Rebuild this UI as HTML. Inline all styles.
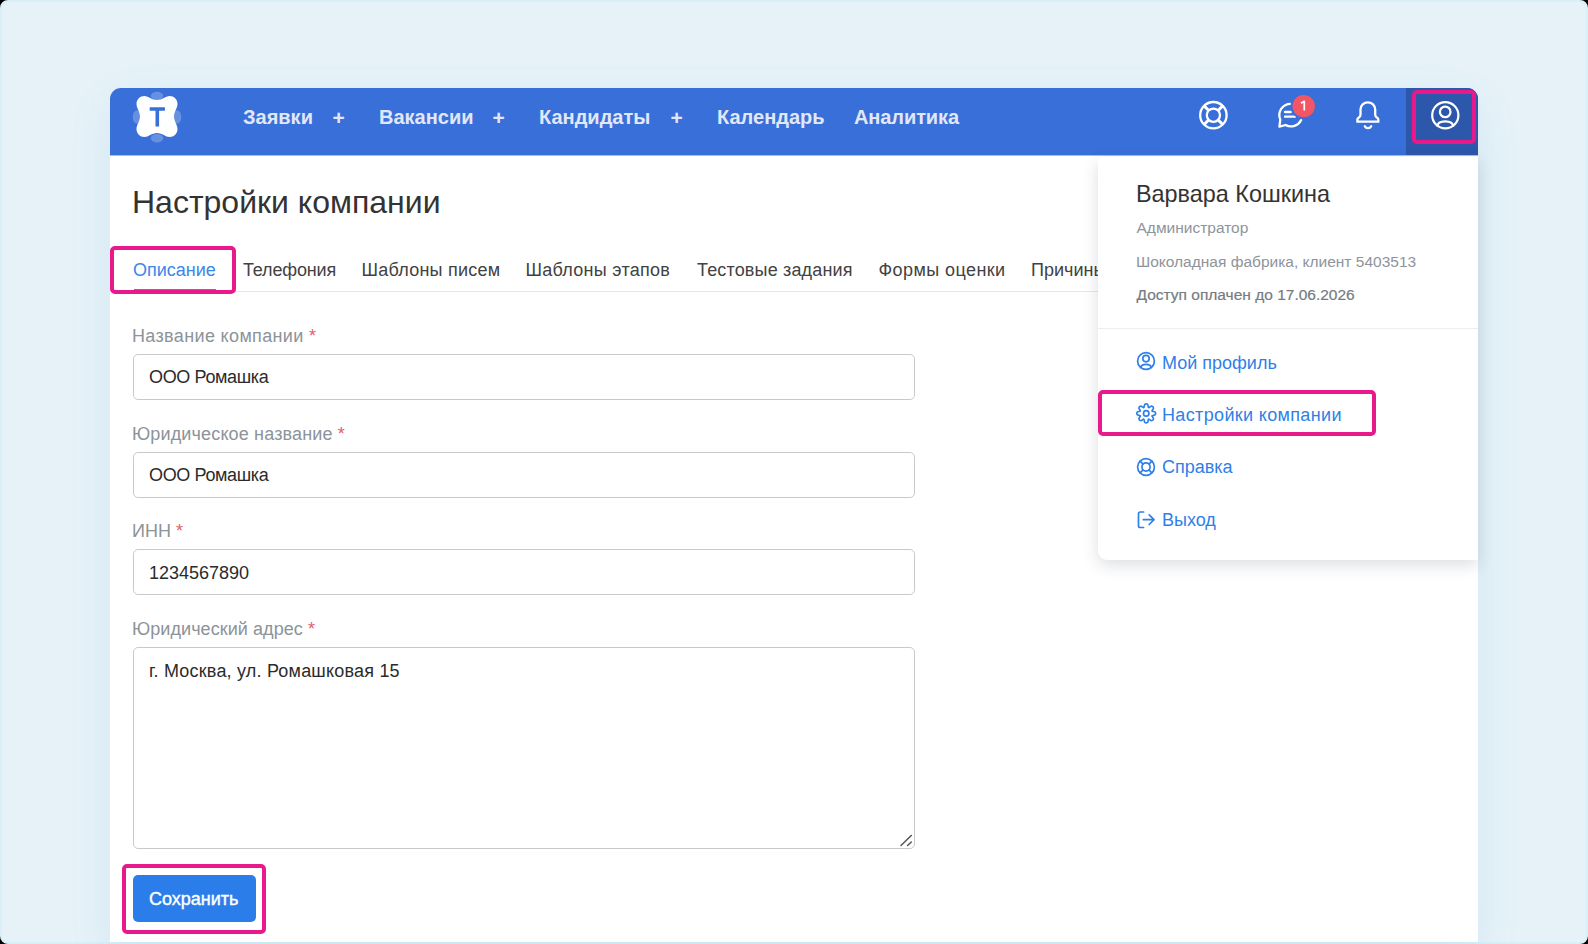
<!DOCTYPE html>
<html><head><meta charset="utf-8">
<style>
*{box-sizing:border-box;margin:0;padding:0}
html,body{width:1588px;height:944px;overflow:hidden;background:#000}
body{font-family:"Liberation Sans",sans-serif;position:relative}
.frame{position:absolute;left:0;top:0;width:1588px;height:944px;border-radius:8px;background:#e6f2f8;border:2px solid #d8f0f8;overflow:hidden}
.card{position:absolute;left:110px;top:88px;width:1368px;height:854px;background:#fff;border-radius:11px 11px 0 0;box-shadow:0 16px 44px rgba(60,150,200,.11)}
.nav{position:absolute;left:110px;top:88px;width:1368px;height:67px;background:#386fd8;border-radius:11px 11px 0 0;overflow:hidden}
.t{position:absolute;white-space:nowrap;line-height:1}
.navt{color:#e2e7f8;font-weight:bold;font-size:20px}
.userbg{position:absolute;left:1296px;top:0;width:72px;height:67px;background:#2c57ab}
.pink{position:absolute;border:4px solid #e8198b;border-radius:5px}
.title{font-size:32px;color:#333}
.tab{font-size:18px;color:#424242}
.lbl{font-size:18px;color:#8c9399}
.req{color:#e3606b}
.inp{position:absolute;left:133px;width:782px;height:46px;border:1px solid #c6cacd;border-radius:5px;background:#fff}
.val{font-size:18px;color:#2b2b2b}
.dd{position:absolute;left:1098px;top:157px;width:380px;height:403px;background:#fff;border-radius:5px 0 0 9px;box-shadow:0 5px 16px rgba(40,50,70,.16)}
.menu{font-size:18px;color:#2f7fe8}
.grey{font-size:15.5px;color:#8e949b}
.svg{position:absolute;left:0;top:0}
</style></head><body>
<div class="frame"></div>
<div class="card"></div>
<div class="nav"><div class="userbg"></div></div>
<div style="position:absolute;left:110px;top:155px;width:1368px;height:1px;background:rgba(56,111,216,.45)"></div>

<!-- nav texts -->
<div class="t navt" style="left:243px;top:107px">Заявки</div>
<div class="t navt" style="left:332.5px;top:106.5px;font-size:21px">+</div>
<div class="t navt" style="left:379px;top:107px">Вакансии</div>
<div class="t navt" style="left:492.5px;top:106.5px;font-size:21px">+</div>
<div class="t navt" style="left:539px;top:107px">Кандидаты</div>
<div class="t navt" style="left:670.5px;top:106.5px;font-size:21px">+</div>
<div class="t navt" style="left:717px;top:107px">Календарь</div>
<div class="t navt" style="left:854px;top:107px;letter-spacing:-0.1px">Аналитика</div>

<!-- title & tabs -->
<div class="t title" style="left:132px;top:186px">Настройки компании</div>
<div style="position:absolute;left:133px;top:291px;width:965px;height:1px;background:#e4e6e8"></div>
<div style="position:absolute;left:134px;top:289px;width:82px;height:2px;background:#3b86ea"></div>
<div class="t tab" style="left:133px;top:261px;color:#3b86ea">Описание</div>
<div class="t tab" style="left:243px;top:261px;letter-spacing:-0.15px">Телефония</div>
<div class="t tab" style="left:361.5px;top:261px;letter-spacing:0.24px">Шаблоны писем</div>
<div class="t tab" style="left:525.5px;top:261px;letter-spacing:0.28px">Шаблоны этапов</div>
<div class="t tab" style="left:697px;top:261px;letter-spacing:0.16px">Тестовые задания</div>
<div class="t tab" style="left:878.5px;top:261px;letter-spacing:0.42px">Формы оценки</div>
<div class="t tab" style="left:1031px;top:261px">Причины отказа</div>

<!-- form -->
<div class="t lbl" style="left:132px;top:327px;letter-spacing:0.35px">Название компании <span class="req">*</span></div>
<div class="inp" style="top:354px;height:46px"></div>
<div class="t val" style="left:149px;top:368px;letter-spacing:-0.36px">ООО Ромашка</div>

<div class="t lbl" style="left:132px;top:425px;letter-spacing:0.15px">Юридическое название <span class="req">*</span></div>
<div class="inp" style="top:452px;height:46px"></div>
<div class="t val" style="left:149px;top:466px;letter-spacing:-0.36px">ООО Ромашка</div>

<div class="t lbl" style="left:132px;top:522px">ИНН <span class="req">*</span></div>
<div class="inp" style="top:549px;height:46px"></div>
<div class="t val" style="left:149px;top:564px">1234567890</div>

<div class="t lbl" style="left:132px;top:620px;letter-spacing:0.07px">Юридический адрес <span class="req">*</span></div>
<div class="inp" style="top:647px;height:202px"></div>
<div class="t val" style="left:149px;top:662px;letter-spacing:0.2px">г. Москва, ул. Ромашковая 15</div>

<div style="position:absolute;left:133px;top:875px;width:123px;height:47px;background:#2b7ee9;border-radius:5px"></div>
<div class="t" style="left:149px;top:890px;font-size:18px;color:#fff;-webkit-text-stroke:0.4px #fff">Сохранить</div>

<!-- dropdown -->
<div class="dd"></div>
<div class="t" style="left:1136px;top:183px;font-size:23.4px;color:#333">Варвара Кошкина</div>
<div class="t grey" style="left:1136.5px;top:220px">Администратор</div>
<div class="t grey" style="left:1136px;top:254px">Шоколадная фабрика, клиент 5403513</div>
<div class="t grey" style="left:1136.5px;top:286.5px;color:#767b81;-webkit-text-stroke:0.2px #767b81">Доступ оплачен до 17.06.2026</div>
<div style="position:absolute;left:1098px;top:328px;width:380px;height:1px;background:#eceef0"></div>
<div class="t menu" style="left:1162px;top:354px">Мой профиль</div>
<div class="t menu" style="left:1162px;top:406px;letter-spacing:0.35px">Настройки компании</div>
<div class="t menu" style="left:1162px;top:458px">Справка</div>
<div class="t menu" style="left:1162px;top:511px">Выход</div>

<!-- icons overlay -->
<svg class="svg" width="1588" height="944" viewBox="0 0 1588 944">
  <!-- logo -->
  <g transform="translate(130,89)">
    <ellipse cx="27" cy="7" rx="6.2" ry="4.2" fill="#6890e0"/>
    <ellipse cx="27" cy="49.2" rx="6.2" ry="4.2" fill="#6890e0"/>
    <ellipse cx="7" cy="28" rx="4.3" ry="6.8" fill="#6890e0"/>
    <ellipse cx="47" cy="28" rx="4.3" ry="6.8" fill="#6890e0"/>
    <path transform="translate(6.5,7)" d="M20.5,4 C26,4 29,0 33,0 C37.5,0 41,3.5 41,8 C41,12 37.5,16 37.5,20.5 C37.5,25 41,29 41,33 C41,37.5 37.5,41 33,41 C29,41 26,37 20.5,37 C15,37 12,41 8,41 C3.5,41 0,37.5 0,33 C0,29 3.5,25 3.5,20.5 C3.5,16 0,12 0,8 C0,3.5 3.5,0 8,0 C12,0 15,4 20.5,4 Z" fill="#fff"/>
    <path d="M19.7,20 H34.9 M27.3,20 V37.6" stroke="#386fd8" stroke-width="3.6" stroke-linecap="butt" fill="none"/>
  </g>
  <!-- lifebuoy -->
  <g fill="none" stroke="#fff" stroke-width="2.3">
    <circle cx="1213.4" cy="115.2" r="13.2"/>
    <circle cx="1213.4" cy="115.2" r="6.6"/>
    <path stroke-width="3" d="M1208.7,110.5 L1204.1,105.9 M1218.1,110.5 L1222.7,105.9 M1208.7,119.9 L1204.1,124.5 M1218.1,119.9 L1222.7,124.5"/>
  </g>
  <!-- chat -->
  <g fill="none" stroke="#fff" stroke-width="2.3" stroke-linecap="round" stroke-linejoin="round">
    <path d="M1290.6,103.8 A11.3,11.3 0 0 0 1280.3,119.6 L1279.4,126.6 L1285.6,125 A11.3,11.3 0 0 0 1301.2,120"/>
    <path d="M1285,112 H1290.8 M1285,116.7 H1295"/>
  </g>
  <circle cx="1303.7" cy="106.1" r="13.2" fill="#386fd8"/>
  <circle cx="1303.7" cy="106.1" r="11.2" fill="#f25563"/>
  <path d="M1301,103.3 L1304.3,101.3 V110.6" stroke="#fff" stroke-width="1.7" fill="none" stroke-linejoin="round"/>
  <!-- bell -->
  <g fill="none" stroke="#fff" stroke-width="2.3" stroke-linecap="round" stroke-linejoin="miter">
    <path d="M1360.5,114.8 V109.6 A7.35,7.35 0 0 1 1375.2,109.6 V114.8 Q1375.2,116.3 1376.8,117.5 Q1378.3,118.3 1378.3,119.5 V121.6 H1357.4 V119.5 Q1357.4,118.3 1358.9,117.5 Q1360.5,116.3 1360.5,114.8 Z"/>
    <path d="M1364.8,126.2 A3.6,3.6 0 0 0 1371.2,126.2"/>
  </g>
  <!-- user -->
  <g fill="none" stroke="#fff" stroke-width="2.25">
    <circle cx="1445.3" cy="115.2" r="13.1"/>
    <circle cx="1445.2" cy="111.9" r="5.3"/>
    <path d="M1437.2,126.5 C1437.5,123 1441,121.3 1445.2,121.3 C1449.5,121.3 1453,123 1453.3,126.5"/>
  </g>

  <!-- dropdown icons -->
  <g fill="none" stroke="#2f7fe8" stroke-width="1.7" stroke-linecap="round" stroke-linejoin="round">
    <circle cx="1146" cy="361" r="8.4"/>
    <circle cx="1146" cy="358.6" r="3.2"/>
    <path d="M1140.6,367.6 C1141,365.4 1143.2,364.3 1146,364.3 C1148.8,364.3 1151,365.4 1151.4,367.6"/>
    <!-- gear -->
    <path d="M1144.78,404.46 C1145.42,403.94 1146.98,403.94 1147.62,404.46 C1148.25,404.98 1147.96,407.31 1148.61,407.58 C1149.26,407.85 1150.70,405.99 1151.52,406.08 C1152.34,406.16 1153.44,407.26 1153.52,408.08 C1153.61,408.90 1151.75,410.34 1152.02,410.99 C1152.29,411.64 1154.62,411.35 1155.14,411.98 C1155.66,412.62 1155.66,414.18 1155.14,414.82 C1154.62,415.45 1152.29,415.16 1152.02,415.81 C1151.75,416.46 1153.61,417.90 1153.52,418.72 C1153.44,419.54 1152.34,420.64 1151.52,420.72 C1150.70,420.81 1149.26,418.95 1148.61,419.22 C1147.96,419.49 1148.25,421.82 1147.62,422.34 C1146.98,422.86 1145.42,422.86 1144.78,422.34 C1144.15,421.82 1144.44,419.49 1143.79,419.22 C1143.14,418.95 1141.70,420.81 1140.88,420.72 C1140.06,420.64 1138.96,419.54 1138.88,418.72 C1138.79,417.90 1140.65,416.46 1140.38,415.81 C1140.11,415.16 1137.78,415.45 1137.26,414.82 C1136.74,414.18 1136.74,412.62 1137.26,411.98 C1137.78,411.35 1140.11,411.64 1140.38,410.99 C1140.65,410.34 1138.79,408.90 1138.88,408.08 C1138.96,407.26 1140.06,406.16 1140.88,406.08 C1141.70,405.99 1143.14,407.85 1143.79,407.58 C1144.44,407.31 1144.15,404.98 1144.78,404.46 Z"/>
    <circle cx="1146.2" cy="413.4" r="2.7"/>
    <!-- lifebuoy -->
    <circle cx="1146" cy="467" r="8.4"/>
    <circle cx="1146" cy="467" r="4.1"/>
    <path d="M1143.1,464.1 L1140.1,461.1 M1148.9,464.1 L1151.9,461.1 M1143.1,469.9 L1140.1,472.9 M1148.9,469.9 L1151.9,472.9"/>
    <!-- exit -->
    <path d="M1143.6,512 H1140.2 Q1138.5,512 1138.5,513.7 V525.8 Q1138.5,527.5 1140.2,527.5 H1143.6"/>
    <path d="M1143.3,519.7 H1154 M1149.2,514.9 L1154,519.7 L1149.2,524.5"/>
  </g>
  <!-- textarea resize -->
  <g stroke="#555" stroke-width="1.5" stroke-linecap="round">
    <path d="M901,845.5 L911.3,835.5 M907.6,845.5 L911.3,842"/>
  </g>
</svg>

<!-- pink highlight boxes -->
<div class="pink" style="left:110px;top:246px;width:126px;height:48px"></div>
<div class="pink" style="left:1412px;top:90px;width:64px;height:54px"></div>
<div class="pink" style="left:1098px;top:390px;width:278px;height:45.5px"></div>
<div class="pink" style="left:122px;top:864px;width:144px;height:70px"></div>
</body></html>
